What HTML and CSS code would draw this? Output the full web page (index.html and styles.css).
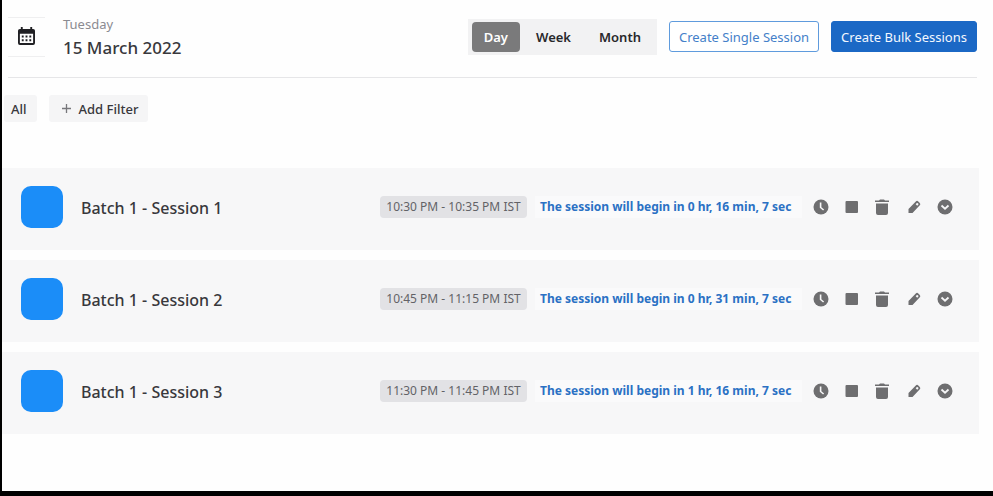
FILE: index.html
```
<!DOCTYPE html>
<html lang="en">
<head>
  <meta charset="UTF-8">
  <meta name="viewport" content="width=device-width, initial-scale=1.0">
  <title>Sessions</title>
  <link rel="stylesheet" href="styles.css">
</head>
<body>
  <header class="header">
    <button class="calendar-button" aria-label="Pick a date">
      <svg width="17" height="19" viewBox="0 0 18 20">
        <path fill="#202024" fill-rule="evenodd" d="M3 0h2v2h8V0h2v2h1a2 2 0 0 1 2 2v13a2 2 0 0 1-2 2H2a2 2 0 0 1-2-2V4a2 2 0 0 1 2-2h1zM2 7v10h14V7zM4 9h2v2H4zM8 9h2v2H8zM12 9h2v2h-2zM4 13h2v2H4zM8 13h2v2H8zM12 13h2v2h-2z"/>
      </svg>
    </button>
    <div class="date">
      <p class="weekday">Tuesday</p>
      <h1>15 March 2022</h1>
    </div>
    <div class="view-switch">
      <button class="active">Day</button>
      <button>Week</button>
      <button>Month</button>
    </div>
    <button class="create create-single">Create Single Session</button>
    <button class="create create-bulk">Create Bulk Sessions</button>
  </header>

  <div class="filters">
    <button class="filter filter-all">All</button>
    <button class="filter filter-add">
      <svg width="9" height="9" viewBox="0 0 9 9"><path d="M4.5 0v9M0 4.5h9" stroke="#77777b" stroke-width="1.3"/></svg>
      Add Filter
    </button>
  </div>

  <main id="sessions" class="sessions"></main>

  <script>
    const sessions = [
      { name: 'Batch 1 - Session 1', time: '10:30 PM - 10:35 PM IST', starts: '0 hr, 16 min, 7 sec' },
      { name: 'Batch 1 - Session 2', time: '10:45 PM - 11:15 PM IST', starts: '0 hr, 31 min, 7 sec' },
      { name: 'Batch 1 - Session 3', time: '11:30 PM - 11:45 PM IST', starts: '1 hr, 16 min, 7 sec' }
    ];

    const actions = [
      { label: 'Reschedule', icon: '<circle cx="8" cy="8" r="7.5" fill="currentColor"/><path d="M7.6 3.5v5l3 2.5" fill="none" stroke="#f7f7f8" stroke-width="1.6"/>' },
      { label: 'Stop', icon: '<rect x="1.500" y="2" width="12.500" height="12" rx="1" fill="currentColor"/>' },
      { label: 'Delete', icon: '<path d="M0 1.500h4l1-1h4l1 1h4V3H0zM1 4.500h12V14a2 2 0 0 1-2 2H3a2 2 0 0 1-2-2z" fill="currentColor"/>' },
      { label: 'Edit', icon: '<path fill="currentColor" fill-rule="evenodd" d="M2.500 14v-4L9.800 2.400q1.300-1.100 2.500 0l1.500 1.500q1.100 1.200 0 2.400L6.500 14zM10.600 4.200l-.9 1 1.500 1.500 1-1q.5-.7 0-1.300-.8-.7-1.600-.2z"/>' },
      { label: 'More', icon: '<circle cx="8" cy="8" r="7.5" fill="currentColor"/><path d="M4.500 6.500L8 9.700l3.500-3.200" fill="none" stroke="#f7f7f8" stroke-width="1.8"/>' }
    ];

    const actionButtons = actions.map(({ label, icon }) => `
      <button aria-label="${label}"><svg width="16" height="16" viewBox="0 0 16 16">${icon}</svg></button>
    `).join('');

    document.getElementById('sessions').innerHTML = sessions.map(({ name, time, starts }) => `
      <article class="session">
        <div class="thumb"></div>
        <h2>${name}</h2>
        <span class="time">${time}</span>
        <span class="countdown">The session will begin in ${starts}</span>
        <div class="actions">${actionButtons}</div>
      </article>
    `).join('');
  </script>
</body>
</html>
```
FILE: styles.css
```
* {
  margin: 0;
  padding: 0;
  box-sizing: border-box;
}

body {
  min-height: 100vh;
  background-color: #fefefe;
  border-left: 2px solid #000;
  border-bottom: 5px solid #000;
  color: #38383c;
  font-family: 'Noto Sans', 'Open Sans', sans-serif;
}

button {
  border: none;
  background: none;
  color: inherit;
  font-family: inherit;
  cursor: pointer;
}

.header {
  display: flex;
  align-items: center;
  height: 78px;
  margin: 0 16px 0 6px;
  padding-bottom: 4px;
  border-bottom: 1px solid #e6e6e8;
}

.calendar-button {
  display: flex;
  align-items: center;
  justify-content: center;
  width: 37px;
  height: 40px;
  border-top: 1px solid #efeff0;
  border-bottom: 1px solid #efeff0;
}

.date {
  flex: 1;
  margin-left: 18px;
}

.weekday {
  font-size: 13px;
  line-height: 22px;
  color: #8b8b91;
}

.date h1 {
  font-size: 17px;
  line-height: 26px;
  font-weight: 500;
}

.view-switch {
  display: flex;
  padding: 3px 4px;
  background-color: #f2f2f3;
}

.view-switch button {
  height: 30px;
  padding: 0 12px;
  margin-right: 4px;
  border-radius: 4px;
  font-size: 13px;
  font-weight: 600;
  color: #28282b;
}

.view-switch .active {
  background-color: #7a7a7b;
  color: #fff;
}

.view-switch button:last-child {
  margin-right: 0;
}

.create {
  height: 31px;
  margin-left: 12px;
  padding: 0 9px;
  border: 1px solid #1b68c5;
  border-radius: 3px;
  font-size: 13px;
}

.create-single {
  border-color: #5f9bdd;
  background-color: #fff;
  color: #4480c9;
}

.create-bulk {
  background-color: #1b68c5;
  color: #f4f8ff;
}

.filters {
  display: flex;
  gap: 12px;
  padding: 17px 2px 0;
}

.filter {
  display: flex;
  align-items: center;
  gap: 8px;
  height: 27px;
  border-radius: 3px;
  background-color: #f5f5f6;
  font-size: 13px;
  font-weight: 500;
}

.filter-all {
  padding: 0 10px 0 7px;
}

.filter-add {
  padding: 0 10px 0 13px;
}

.sessions {
  display: flex;
  flex-direction: column;
  gap: 10px;
  margin: 46px 14px 0 0;
}

.session {
  display: flex;
  align-items: center;
  height: 82px;
  padding: 0 22px 4px 19px;
  background-color: #f7f7f8;
}

.thumb {
  width: 42px;
  height: 42px;
  border-radius: 10px;
  background-color: #1b8df8;
}

.session h2 {
  flex: 1;
  margin-left: 18px;
  padding-top: 2px;
  font-size: 16px;
  line-height: 24px;
  font-weight: 500;
}

.time {
  width: 147px;
  line-height: 22px;
  border-radius: 4px;
  background-color: #e2e2e5;
  color: #626267;
  font-size: 12px;
  text-align: center;
}

.countdown {
  width: 267px;
  margin-left: 8px;
  padding-left: 5px;
  line-height: 22px;
  background-color: #fafafb;
  color: #2b71c4;
  font-size: 12px;
  font-weight: 700;
}

.actions {
  display: flex;
  gap: 7px;
  margin-left: 7px;
  color: #6e6e70;
}

.actions button {
  display: flex;
  align-items: center;
  justify-content: center;
  width: 24px;
  height: 24px;
}
```
